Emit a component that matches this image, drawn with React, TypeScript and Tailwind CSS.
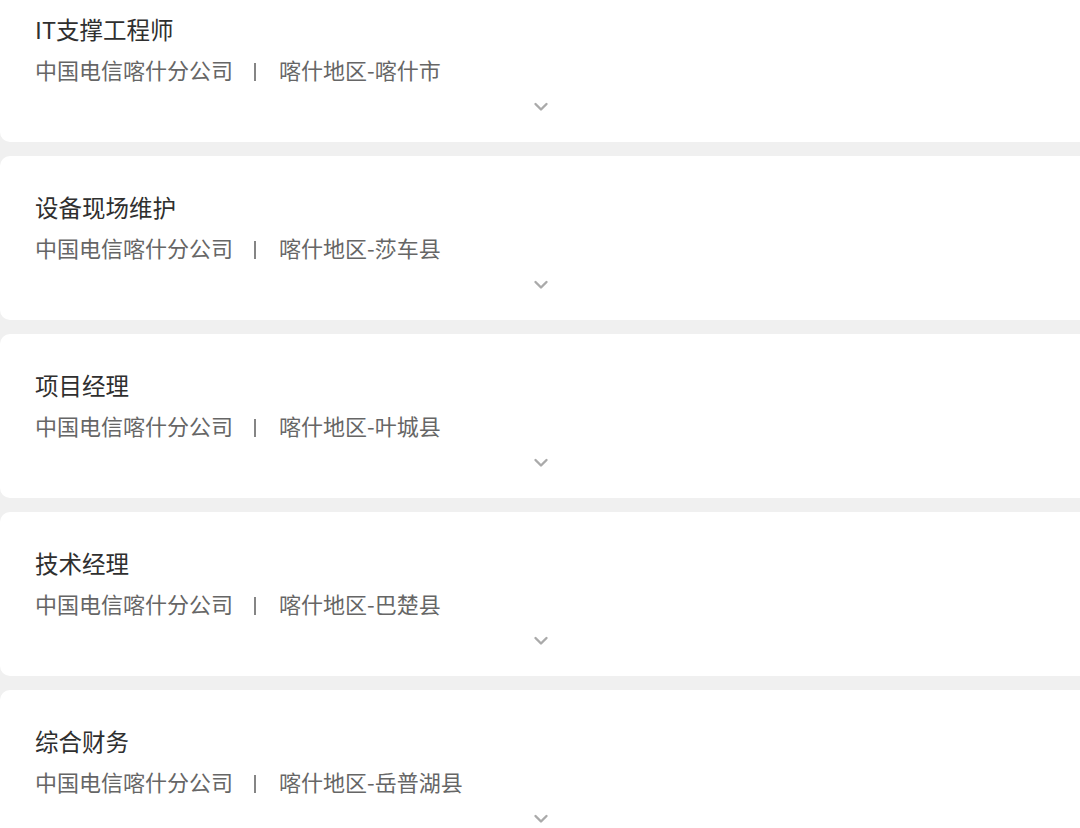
const jobs = [
  { title: "IT支撑工程师", company: "中国电信喀什分公司", area: "喀什地区-喀什市" },
  { title: "设备现场维护", company: "中国电信喀什分公司", area: "喀什地区-莎车县" },
  { title: "项目经理", company: "中国电信喀什分公司", area: "喀什地区-叶城县" },
  { title: "技术经理", company: "中国电信喀什分公司", area: "喀什地区-巴楚县" },
  { title: "综合财务", company: "中国电信喀什分公司", area: "喀什地区-岳普湖县" },
];

function Chevron() {
  return (
    <svg width="16" height="10" viewBox="0 0 16 10" fill="none">
      <path
        d="M2.5 2 L8 7.5 L13.5 2"
        stroke="#aaaaaa"
        strokeWidth="2.4"
        strokeLinecap="round"
        strokeLinejoin="round"
      />
    </svg>
  );
}

function JobCard({ title, company, area }: { title: string; company: string; area: string }) {
  return (
    <div className="h-[164px] shrink-0 rounded-l-[10px] bg-white pt-[36px]">
      <div className="px-[35px]">
        <h3 className="text-[23.5px] leading-[30px] text-[#2f2f2f]">{title}</h3>
        <p className="mt-[10px] flex items-center text-[22px] leading-[30px] text-[#666666]">
          <span>{company}</span>
          {/* separator */}
          <span className="ml-[21px] mr-[23px] mt-[5px] h-[18px] w-[2px] bg-[#858585]" />
          <span>{area}</span>
        </p>
      </div>
      <div className="mt-[18px] flex justify-center pl-[2px]">
        <Chevron />
      </div>
    </div>
  );
}

export default function App() {
  return (
    <div
      className="h-[828px] w-[1080px] overflow-hidden bg-[#f0f0f0]"
      style={{ fontFamily: '"Noto Sans CJK SC", "Noto Sans", sans-serif' }}
    >
      <div className="-mt-[22px] flex flex-col gap-[14px]">
        {jobs.map((job) => (
          <JobCard key={job.title} {...job} />
        ))}
      </div>
    </div>
  );
}
